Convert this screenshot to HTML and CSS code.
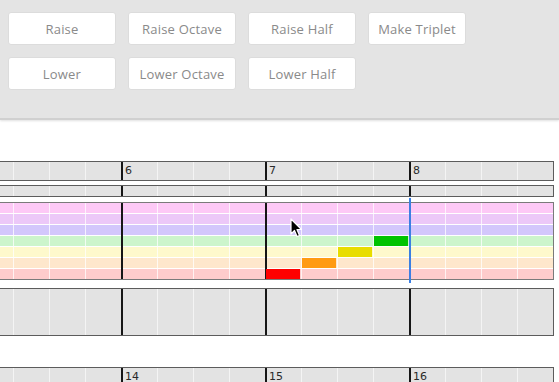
FILE: index.html
```html
<!DOCTYPE html>
<html>
<head>
<meta charset="utf-8">
<link rel="stylesheet" href="styles.css">
</head>
<body>
<div class="toolbar">
  <div class="btn-row">
    <button class="btn">Raise</button>
    <button class="btn">Raise Octave</button>
    <button class="btn">Raise Half</button>
    <button class="btn narrow">Make Triplet</button>
  </div>
  <div class="btn-row">
    <button class="btn">Lower</button>
    <button class="btn">Lower Octave</button>
    <button class="btn">Lower Half</button>
  </div>
</div>

<div class="score">
  <div class="system">
    <div class="track ruler">
      <div class="m first"></div>
      <div class="m"><span class="num">6</span></div>
      <div class="m"><span class="num">7</span></div>
      <div class="m"><span class="num">8</span></div>
    </div>
    <div class="track strip">
      <div class="m first"></div>
      <div class="m"></div>
      <div class="m"></div>
      <div class="m"></div>
    </div>
    <div class="track piano">
      <div class="m first"></div>
      <div class="m"></div>
      <div class="m"></div>
      <div class="m"></div>
      <div class="note red" style="left:266px; top:66px"></div>
      <div class="note orange" style="left:302px; top:55px"></div>
      <div class="note yellow" style="left:338px; top:44px"></div>
      <div class="note green" style="left:374px; top:33px"></div>
    </div>
    <div class="track lower">
      <div class="m first"></div>
      <div class="m"></div>
      <div class="m"></div>
      <div class="m"></div>
    </div>
    <div class="playhead"></div>
    <svg class="cursor" width="14" height="21" viewBox="0 0 14 21">
      <path d="M1 1 L1 16 L4.5 12.5 L7 18.5 L9.5 17.5 L7 11.5 L11.5 11.5 Z" fill="#000" stroke="#fff" stroke-width="1.2" stroke-linejoin="round"/>
    </svg>
  </div>

  <div class="system second">
    <div class="track ruler">
      <div class="m first"></div>
      <div class="m"><span class="num">14</span></div>
      <div class="m"><span class="num">15</span></div>
      <div class="m"><span class="num">16</span></div>
    </div>
  </div>
</div>
</body>
</html>
```

FILE: styles.css
```css
* { box-sizing: border-box; }

html, body {
  margin: 0;
  background: #fff;
  overflow: hidden;
}

body {
  font-family: "Open Sans", "DejaVu Sans", sans-serif;
}

.toolbar {
  height: 120px;
  background: #e4e4e4;
  padding: 12px 8px 0;
  border-bottom: 2px solid #d0d0d0;
  box-shadow: 0 1px 2px rgba(0, 0, 0, 0.12);
  display: flex;
  flex-direction: column;
  gap: 12px;
}

.btn-row {
  display: flex;
  gap: 12px;
}

.btn {
  width: 108px;
  height: 33px;
  padding: 0;
  background: #fff;
  border: 1px solid #dcdcdc;
  border-radius: 3px;
  font-family: "Open Sans", sans-serif;
  font-size: 13px;
  letter-spacing: 0.2px;
  color: #8a8a8a;
  display: flex;
  align-items: center;
  justify-content: center;
}

.btn.narrow { width: 98px; }

.score {
  padding-top: 41px;
}

.system {
  position: relative;
  width: 554px;
}

.system.second {
  margin-top: 31px;
}

.track {
  display: flex;
  border: 1px solid #5c5c5c;
  border-left: none;
  background-color: #e3e3e3;
  background-image: linear-gradient(to right, rgba(255, 255, 255, 0.6) 1px, transparent 1px);
  background-size: 36px 100%;
  background-position: 13px 0;
}

.m {
  flex: none;
  width: 144px;
  border-left: 2px solid #161616;
}

.m.first {
  width: 121px;
  border-left: none;
}

.ruler {
  height: 20px;
}

.num {
  display: block;
  padding-left: 2px;
  font-family: "DejaVu Sans", sans-serif;
  font-size: 11px;
  line-height: 17px;
  color: #2a2a2a;
}

.strip {
  height: 12px;
  margin-top: 4px;
}

.piano {
  position: relative;
  height: 78px;
  margin-top: 5px;
  border-color: #7a7a7a;
  background-color: #fff;
  background-image:
    linear-gradient(to right, rgba(255, 255, 255, 0.75) 1px, transparent 1px),
    linear-gradient(to bottom,
      #fdc9f6 0 10px, #fff 10px 11px,
      #ecc8f8 11px 21px, #fff 21px 22px,
      #d3c7fc 22px 32px, #fff 32px 33px,
      #ccf5cc 33px 43px, #fff 43px 44px,
      #fef9cc 44px 54px, #fff 54px 55px,
      #fee7cc 55px 65px, #fff 65px 66px,
      #fecccc 66px 76px);
  background-size: 36px 100%, 100% 100%;
  background-position: 13px 0, 0 0;
  background-repeat: repeat-x, no-repeat;
}

.note {
  position: absolute;
  width: 34px;
  height: 10px;
}

.note.red { background: #ff0000; }
.note.orange { background: #ff9b12; }
.note.yellow { background: #e8dd00; }
.note.green { background: #00c300; }

.lower {
  height: 48px;
  margin-top: 8px;
}

.playhead {
  position: absolute;
  left: 409px;
  top: 37px;
  width: 2px;
  height: 85px;
  background: #3b7fe3;
}

.cursor {
  position: absolute;
  left: 290px;
  top: 57px;
}
```
